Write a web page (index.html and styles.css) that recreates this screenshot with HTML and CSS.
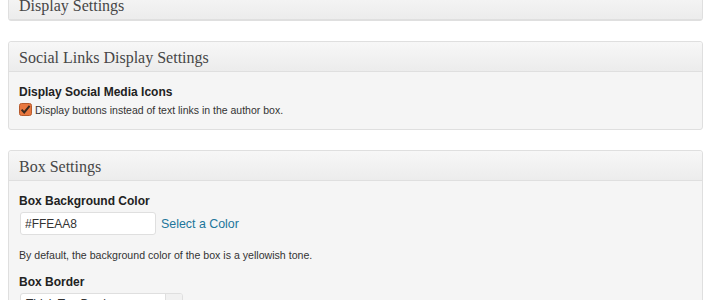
FILE: index.html
```html
<!DOCTYPE html>
<html lang="en">
  <head>
    <meta charset="UTF-8" />
    <meta name="viewport" content="width=device-width, initial-scale=1.0" />
    <title>Settings</title>
    <link rel="stylesheet" href="styles.css">
  </head>
  <body>
    <!-- Display settings (top of page, cut off) -->
    <div class="postbox first">
      <h3 class="hndle">Display Settings</h3>
    </div>

    <!-- Social links -->
    <div class="postbox">
      <h3 class="hndle">Social Links Display Settings</h3>
      <div class="inside">
        <div class="field-label">Display Social Media Icons</div>
        <label class="check-row">
          <svg class="check" width="13" height="13" viewBox="0 0 13 13">
            <rect x="0.5" y="0.5" width="12" height="12" rx="2" fill="#e8773f" stroke="#b65a2c" />
            <path d="M2.6 6.6 L5.2 9.4 L10.6 2.8" fill="none" stroke="#3a2a20" stroke-width="2" />
          </svg>
          <span>Display buttons instead of text links in the author box.</span>
        </label>
      </div>
    </div>

    <!-- Box settings -->
    <div class="postbox">
      <h3 class="hndle">Box Settings</h3>
      <div class="inside">
        <div class="field-label">Box Background Color</div>
        <div class="color-row">
          <input class="text-input" type="text" value="#FFEAA8" />
          <a class="color-link" href="#">Select a Color</a>
        </div>
        <p class="description">By default, the background color of the box is a yellowish tone.</p>
        <div class="field-label">Box Border</div>
        <div class="select">
          <span class="select-text">Thick Top Border</span>
          <span class="select-arrow"></span>
        </div>
      </div>
    </div>
  </body>
</html>
```

FILE: styles.css
```css
/* Page */
body {
  margin: 0 11px 0 8px;
  background-color: #fff;
  color: #333;
  font-family: "Liberation Sans", Arial, sans-serif;
  font-size: 12px;
}

/* Meta boxes */
.postbox {
  border: 1px solid #dfdfdf;
  border-radius: 3px;
  background-color: #f5f5f5;
  margin-bottom: 20px;
  box-shadow: inset 0 1px 0 #fff;
}

.postbox.first {
  margin-top: -11px;
}

.hndle {
  margin: 0;
  height: 29px;
  line-height: 32px;
  padding: 0 10px;
  font-family: "Liberation Serif", "Times New Roman", serif;
  font-weight: normal;
  font-size: 16px;
  color: #464646;
  background: linear-gradient(to bottom, #f7f7f7, #ececec);
  border-bottom: 1px solid #dfdfdf;
  border-radius: 3px 3px 0 0;
  overflow: hidden;
}

.inside {
  padding: 12px 10px 13px;
}

.field-label {
  font-weight: bold;
  font-size: 12px;
  color: #222;
  line-height: 16px;
}

.check-row {
  display: flex;
  align-items: center;
  gap: 3px;
  margin-top: 3px;
  font-size: 10.5px;
  color: #333;
}

.color-row {
  display: flex;
  align-items: center;
  gap: 5px;
  margin-top: 3px;
}

.text-input {
  width: 136px;
  height: 23px;
  box-sizing: border-box;
  border: 1px solid #dfdfdf;
  border-radius: 3px;
  background-color: #fff;
  padding: 0 4px;
  font-family: "Liberation Sans", Arial, sans-serif;
  font-size: 12px;
  color: #333;
  margin: 0 0 0 1px;
}

.color-link {
  color: #21759b;
  text-decoration: none;
  font-size: 12.4px;
}

.description {
  margin: 14px 0 13px;
  font-size: 10.6px;
  color: #333;
}

.select {
  display: flex;
  width: 163px;
  height: 22px;
  margin: 3px 0 0 1px;
  box-sizing: border-box;
  border: 1px solid #dfdfdf;
  border-radius: 3px;
  background-color: #fff;
  overflow: hidden;
}

.select-text {
  flex: 1;
  padding: 3px 5px;
  font-size: 12px;
  color: #333;
}

.select-arrow {
  width: 16px;
  border-left: 1px solid #dfdfdf;
  background-color: #f1f1f1;
}
```
